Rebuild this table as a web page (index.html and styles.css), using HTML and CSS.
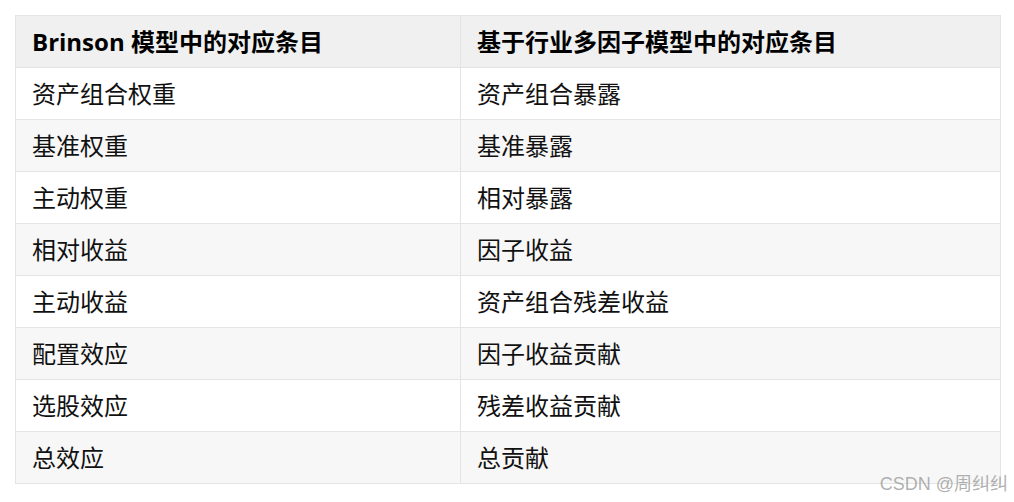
FILE: index.html
```html
<!DOCTYPE html>
<html lang="zh-CN">
<head>
<meta charset="utf-8">
<link rel="stylesheet" href="styles.css">
</head>
<body>
<div class="page">
<table class="map">
  <thead>
    <tr><th class="c1">Brinson 模型中的对应条目</th><th>基于行业多因子模型中的对应条目</th></tr>
  </thead>
  <tbody>
    <tr><td>资产组合权重</td><td>资产组合暴露</td></tr>
    <tr><td>基准权重</td><td>基准暴露</td></tr>
    <tr><td>主动权重</td><td>相对暴露</td></tr>
    <tr><td>相对收益</td><td>因子收益</td></tr>
    <tr><td>主动收益</td><td>资产组合残差收益</td></tr>
    <tr><td>配置效应</td><td>因子收益贡献</td></tr>
    <tr><td>选股效应</td><td>残差收益贡献</td></tr>
    <tr><td>总效应</td><td>总贡献</td></tr>
  </tbody>
</table>
<div class="mark">CSDN @周纠纠</div>
</div>
</body>
</html>
```
FILE: styles.css
```css
html, body {
  margin: 0;
  padding: 0;
  background: #ffffff;
}
.page {
  position: relative;
  width: 1014px;
  height: 502px;
  padding: 15px 0 0 15px;
  box-sizing: border-box;
}
.map {
  border-collapse: collapse;
  width: 986px;
  font-family: "Open Sans", "Noto Sans CJK SC", sans-serif;
  font-size: 24px;
  color: #111;
}
.map th, .map td {
  border: 1px solid #e4e4e4;
  height: 52px;
  padding: 0 16px;
  box-sizing: border-box;
  text-align: left;
  vertical-align: middle;
  line-height: 28px;
}
.map th {
  background: #f0f0f0;
  font-weight: 700;
  color: #000;
}
.map .c1 {
  width: 445px;
}
.map tbody tr:nth-child(odd) td {
  background: #ffffff;
}
.map tbody tr:nth-child(even) td {
  background: #f7f7f7;
}
.mark {
  position: absolute;
  right: 6px;
  bottom: 7px;
  font-family: "Liberation Sans", "Noto Sans CJK SC", sans-serif;
  font-size: 18px;
  color: rgba(150, 150, 150, 0.75);
}
```
